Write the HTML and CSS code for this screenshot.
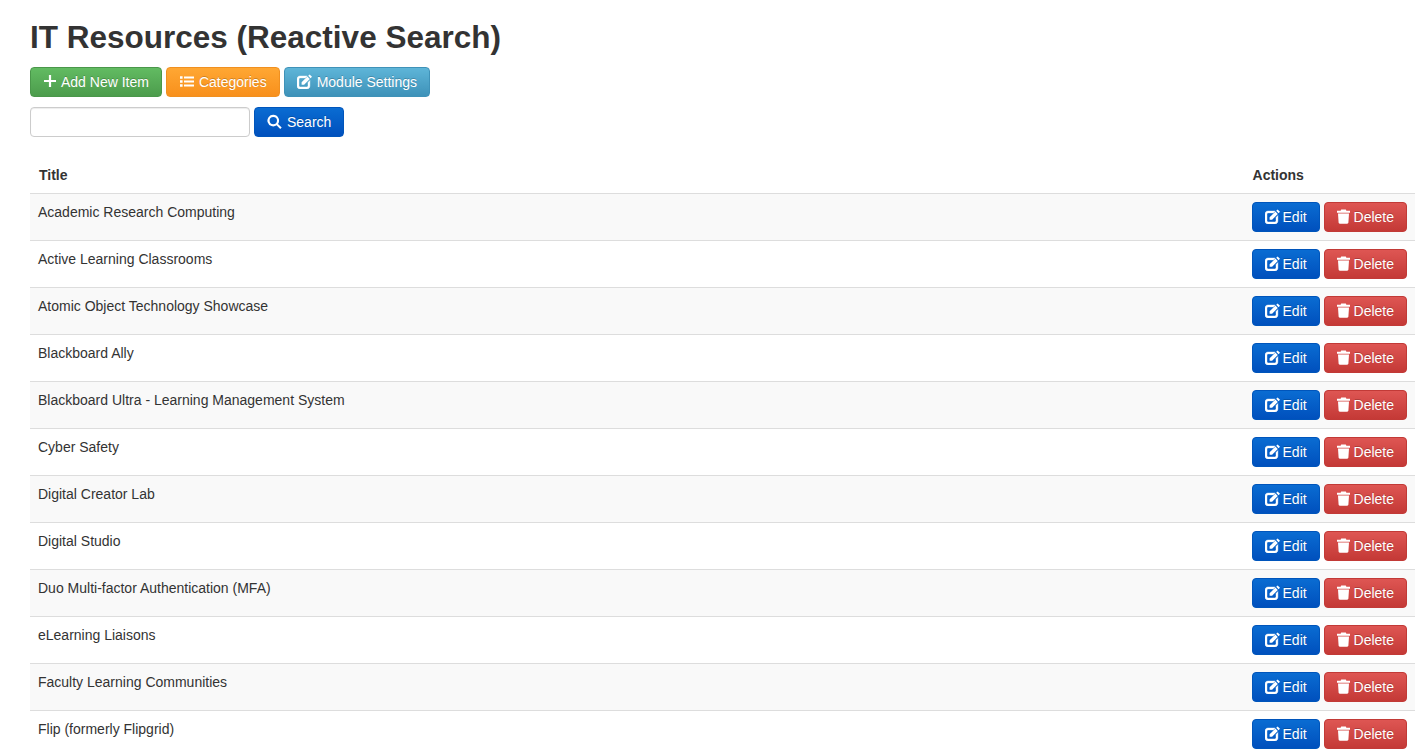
FILE: index.html
```html
<!DOCTYPE html>
<html lang="en">

<head>
    <meta charset="UTF-8">
    <meta name="viewport" content="width=device-width, initial-scale=1.0">
    <title>IT Resources (Reactive Search)</title>
    <link rel="stylesheet" href="styles.css">
</head>

<body>
    <svg class="defs" width="0" height="0">
        <symbol id="i-plus" viewBox="0 0 14 14"><path d="M5.900 1h2.200v4.900H13v2.200H8.100V13H5.900V8.100H1V5.900h4.900z"/></symbol>
        <symbol id="i-list" viewBox="0 0 15 15"><path d="M1 2.300h2.600v2.400H1zM5 2.600h10v1.900H5zM1 6.300h2.600v2.400H1zM5 6.600h10v1.900H5zM1 10.300h2.600v2.400H1zM5 10.600h10v1.900H5z"/></symbol>
        <symbol id="i-edit" viewBox="0 0 15 15"><path d="M3 2h7.200L8.300 3.900H3.200c-.7 0-1.200.5-1.200 1.200v6.600c0 .7.500 1.200 1.200 1.200h6.600c.7 0 1.200-.5 1.200-1.200V8.400l1.900-1.900v5.400c0 1.700-1.300 3-3 3H3c-1.700 0-3-1.300-3-3V5c0-1.700 1.300-3 3-3z" stroke="#fff" stroke-width=".4"/><path d="M12.600.4l2.400 2.400-1.400 1.400-2.400-2.400zM10.400 2.600l2.400 2.400-5.700 5.700H4.600V8.300z"/></symbol>
        <symbol id="i-search" viewBox="0 0 15 15"><path fill-rule="evenodd" d="M6.300.8a5.800 5.800 0 0 1 4.700 9.100l3.700 3.700-1.500 1.400-3.600-3.700A5.800 5.800 0 1 1 6.300.8zm0 2.100a3.700 3.700 0 1 0 0 7.400 3.700 3.700 0 0 0 0-7.400z"/></symbol>
        <symbol id="i-trash" viewBox="0 0 13 15"><path d="M4.200.6h4.600l.6 1.200H13v1.900H0V1.800h3.600zM1 4.500h11l-.6 9c-.1.700-.5 1.200-1.200 1.200H2.800c-.7 0-1.100-.5-1.200-1.200z"/></symbol>
    </svg>

    <div class="page">
        <h1>IT Resources (Reactive Search)</h1>

        <div class="toolbar">
            <a class="btn green"><svg class="icon small"><use href="#i-plus"/></svg> Add New Item</a>
            <a class="btn orange wide-gap"><svg class="icon"><use href="#i-list"/></svg> Categories</a>
            <a class="btn teal wide-gap"><svg class="icon"><use href="#i-edit"/></svg> Module Settings</a>
        </div>

        <form class="search">
            <input type="text">
            <a class="btn blue wide-gap"><svg class="icon"><use href="#i-search"/></svg> Search</a>
        </form>

        <table>
            <thead>
                <tr>
                    <th>Title</th>
                    <th class="actions">Actions</th>
                </tr>
            </thead>
            <tbody>
                <tr>
                    <td>Academic Research Computing</td>
                    <td class="actions"><a class="btn blue edit"><svg class="icon"><use href="#i-edit"/></svg> Edit</a><a class="btn red"><svg class="icon trash"><use href="#i-trash"/></svg> Delete</a></td>
                </tr>
                <tr>
                    <td>Active Learning Classrooms</td>
                    <td class="actions"><a class="btn blue edit"><svg class="icon"><use href="#i-edit"/></svg> Edit</a><a class="btn red"><svg class="icon trash"><use href="#i-trash"/></svg> Delete</a></td>
                </tr>
                <tr>
                    <td>Atomic Object Technology Showcase</td>
                    <td class="actions"><a class="btn blue edit"><svg class="icon"><use href="#i-edit"/></svg> Edit</a><a class="btn red"><svg class="icon trash"><use href="#i-trash"/></svg> Delete</a></td>
                </tr>
                <tr>
                    <td>Blackboard Ally</td>
                    <td class="actions"><a class="btn blue edit"><svg class="icon"><use href="#i-edit"/></svg> Edit</a><a class="btn red"><svg class="icon trash"><use href="#i-trash"/></svg> Delete</a></td>
                </tr>
                <tr>
                    <td>Blackboard Ultra - Learning Management System</td>
                    <td class="actions"><a class="btn blue edit"><svg class="icon"><use href="#i-edit"/></svg> Edit</a><a class="btn red"><svg class="icon trash"><use href="#i-trash"/></svg> Delete</a></td>
                </tr>
                <tr>
                    <td>Cyber Safety</td>
                    <td class="actions"><a class="btn blue edit"><svg class="icon"><use href="#i-edit"/></svg> Edit</a><a class="btn red"><svg class="icon trash"><use href="#i-trash"/></svg> Delete</a></td>
                </tr>
                <tr>
                    <td>Digital Creator Lab</td>
                    <td class="actions"><a class="btn blue edit"><svg class="icon"><use href="#i-edit"/></svg> Edit</a><a class="btn red"><svg class="icon trash"><use href="#i-trash"/></svg> Delete</a></td>
                </tr>
                <tr>
                    <td>Digital Studio</td>
                    <td class="actions"><a class="btn blue edit"><svg class="icon"><use href="#i-edit"/></svg> Edit</a><a class="btn red"><svg class="icon trash"><use href="#i-trash"/></svg> Delete</a></td>
                </tr>
                <tr>
                    <td>Duo Multi-factor Authentication (MFA)</td>
                    <td class="actions"><a class="btn blue edit"><svg class="icon"><use href="#i-edit"/></svg> Edit</a><a class="btn red"><svg class="icon trash"><use href="#i-trash"/></svg> Delete</a></td>
                </tr>
                <tr>
                    <td>eLearning Liaisons</td>
                    <td class="actions"><a class="btn blue edit"><svg class="icon"><use href="#i-edit"/></svg> Edit</a><a class="btn red"><svg class="icon trash"><use href="#i-trash"/></svg> Delete</a></td>
                </tr>
                <tr>
                    <td>Faculty Learning Communities</td>
                    <td class="actions"><a class="btn blue edit"><svg class="icon"><use href="#i-edit"/></svg> Edit</a><a class="btn red"><svg class="icon trash"><use href="#i-trash"/></svg> Delete</a></td>
                </tr>
                <tr>
                    <td>Flip (formerly Flipgrid)</td>
                    <td class="actions"><a class="btn blue edit"><svg class="icon"><use href="#i-edit"/></svg> Edit</a><a class="btn red"><svg class="icon trash"><use href="#i-trash"/></svg> Delete</a></td>
                </tr>
            </tbody>
        </table>
    </div>
</body>

</html>
```

FILE: styles.css
```css
* {
    margin: 0;
    padding: 0;
    box-sizing: border-box;
}

html, body {
    height: 754px;
    overflow: hidden;
}

body {
    background: #fff;
    color: #333;
    font-family: "Liberation Sans", Arial, sans-serif;
    font-size: 14px;
    line-height: 20px;
}

.defs {
    display: block;
}

.page {
    padding: 18px 6px 0 30px;
}

h1 {
    font-size: 31.5px;
    font-weight: bold;
    line-height: 38px;
    margin-bottom: 11px;
}

.toolbar, .search {
    display: flex;
    gap: 4px;
    margin-bottom: 10px;
}

.search {
    margin-bottom: 20px;
}

.search input {
    width: 220px;
    height: 30px;
    border: 1px solid #ccc;
    border-radius: 4px;
    box-shadow: inset 0 1px 1px rgba(0, 0, 0, .075);
}

.btn {
    display: inline-flex;
    align-items: center;
    gap: 3px;
    height: 30px;
    padding: 0 12px;
    border: 1px solid transparent;
    border-radius: 4px;
    color: #fff;
    text-shadow: 0 -1px 0 rgba(0, 0, 0, .2);
    white-space: nowrap;
}

.wide-gap {
    gap: 5px;
}

.icon {
    width: 15px;
    height: 15px;
    margin-top: -2px;
    fill: #fff;
}

.icon.small {
    width: 14px;
    height: 14px;
    margin-right: 1px;
}

.icon.trash {
    width: 13px;
    height: 15px;
    margin-right: 1px;
}

.green {
    background: linear-gradient(#62bb62, #4c9c4c);
    border-color: #4a974a;
}

.orange {
    background: linear-gradient(#ffa733, #f8901c);
    border-color: #f09020;
}

.teal {
    background: linear-gradient(#5eb5d8, #3e92b9);
    border-color: #3f92b8;
}

.blue {
    background: linear-gradient(#0a6cd2, #0050bd);
    border-color: #0055bb;
}

.red {
    background: linear-gradient(#de5653, #c43936);
    border-color: #c23a37;
}

/* edit label is a pixel narrower than the font gives here */
.edit {
    width: 68px;
    padding-right: 11px;
}

table {
    width: 100%;
    border-collapse: collapse;
}

th {
    padding: 8px 8px 8px 9px;
    text-align: left;
    border-bottom: 1px solid #ddd;
}

td {
    padding: 8px;
    vertical-align: top;
    border-top: 1px solid #ddd;
}

thead + tbody tr:first-child td {
    border-top: 0;
}

tbody tr:nth-child(odd) {
    background: #f9f9f9;
}

.actions {
    width: 171px;
    white-space: nowrap;
}

.actions .btn + .btn {
    margin-left: 4px;
}
```
